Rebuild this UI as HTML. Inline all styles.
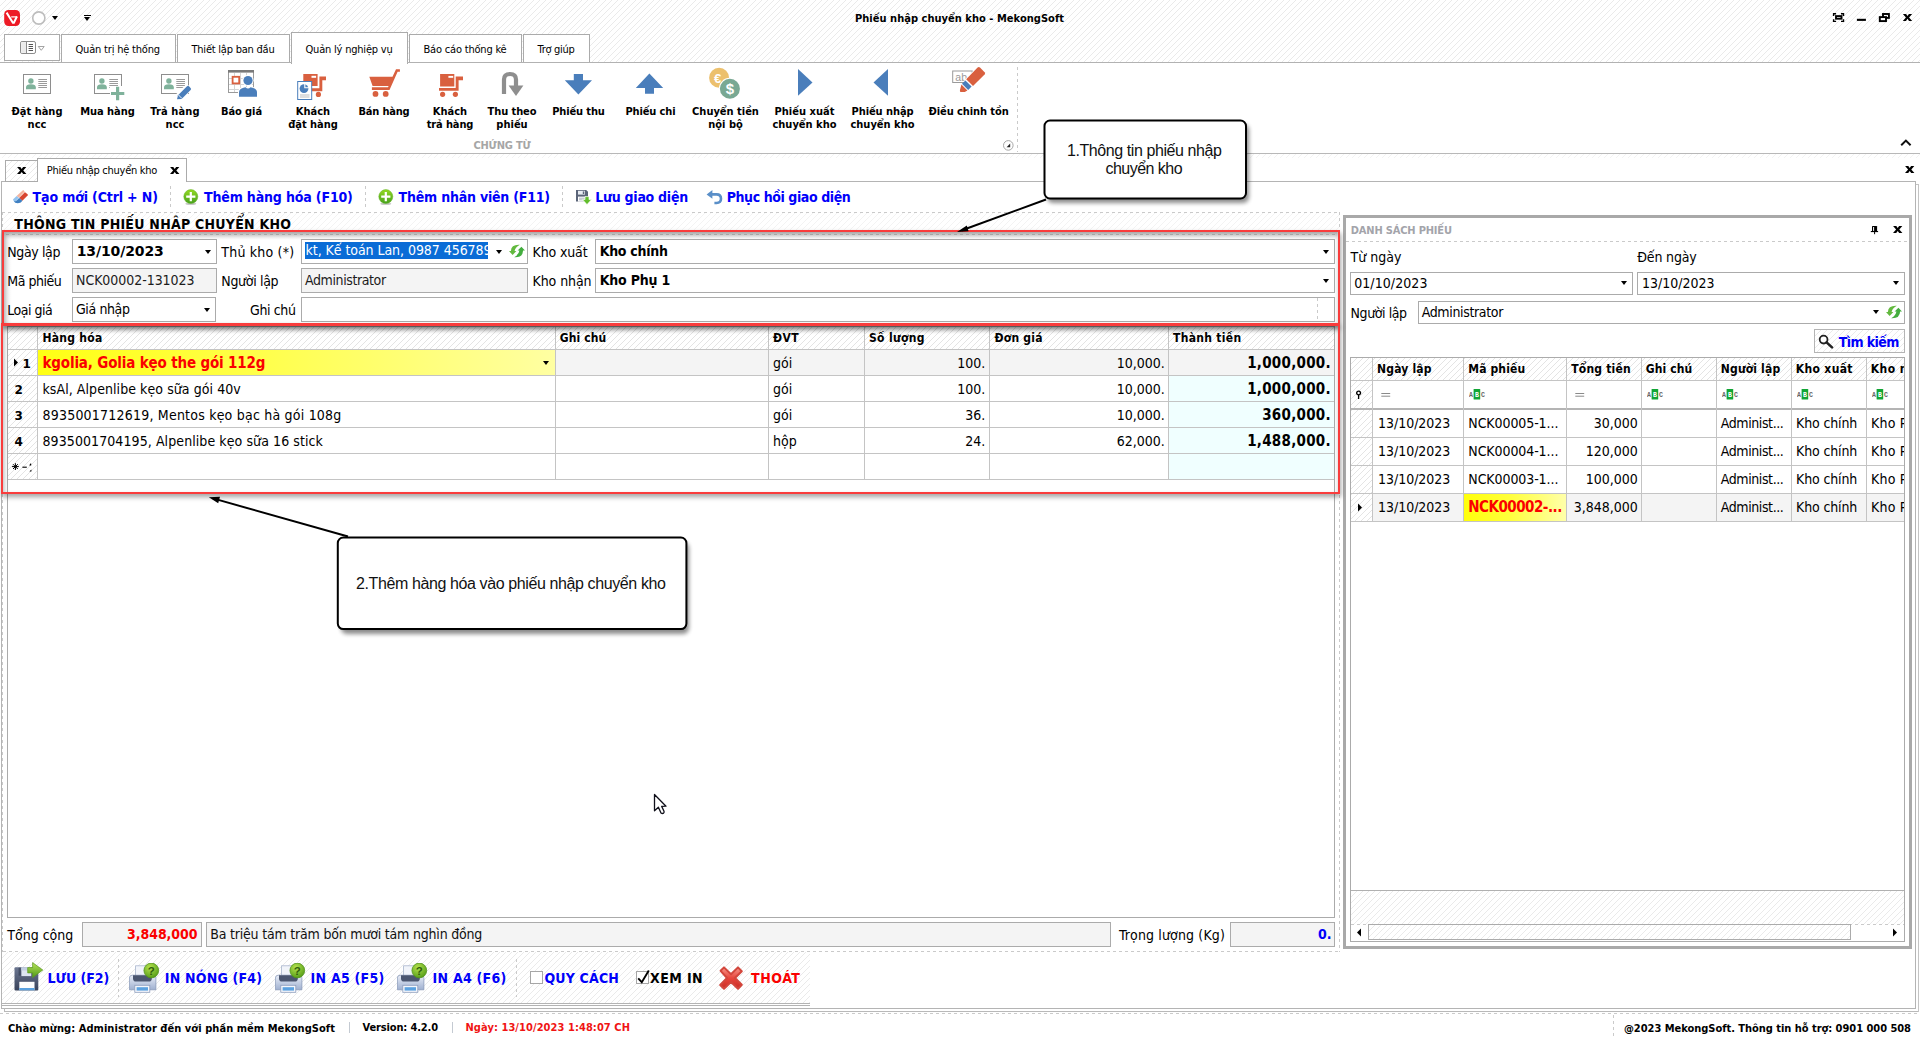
<!DOCTYPE html>
<html lang="vi">
<head>
<meta charset="utf-8">
<title>Phiếu nhập chuyển kho - MekongSoft</title>
<style>
*{box-sizing:border-box;margin:0;padding:0}
html,body{width:1920px;height:1039px;overflow:hidden;background:#fff}
body{position:relative;font-family:"DejaVu Sans Condensed","Liberation Sans",sans-serif;font-size:14px;color:#000;line-height:1}
.a{position:absolute}
.t{position:absolute;white-space:nowrap;line-height:16px;height:16px}
.b{font-weight:bold}
.s11{font-size:11px;line-height:13px;height:13px}
.h12{font-size:12px;line-height:15px;height:15px}
.hatch{background-color:#fff;background-image:repeating-linear-gradient(135deg,#eaeaea 0,#eaeaea 0.7px,rgba(255,255,255,0) 0.7px,rgba(255,255,255,0) 4.2426px)}
.hatch2{background-color:#fff;background-image:repeating-linear-gradient(135deg,#e4e4e4 0,#e4e4e4 0.7px,rgba(255,255,255,0) 0.7px,rgba(255,255,255,0) 4.2426px)}
.hatchL{background-color:#fff;background-image:repeating-linear-gradient(135deg,#f3f3f3 0,#f3f3f3 0.7px,rgba(255,255,255,0) 0.7px,rgba(255,255,255,0) 4.2426px)}
.box{position:absolute;border:1px solid #ababab;background-color:#fff}
.dis{background-color:#f4f4f4}
.blue{color:#0000fa}
.red{color:#fa0000}
.arr{position:absolute;width:0;height:0;border-left:3.5px solid transparent;border-right:3.5px solid transparent;border-top:4px solid #000}
.vdash{position:absolute;width:1px;background:repeating-linear-gradient(180deg,#cacaca 0,#cacaca 3px,rgba(255,255,255,0) 3px,rgba(255,255,255,0) 6px)}
.hdash{position:absolute;height:1px;background:repeating-linear-gradient(90deg,#cacaca 0,#cacaca 3px,rgba(255,255,255,0) 3px,rgba(255,255,255,0) 6px)}
.rl{position:absolute;text-align:center;font-weight:bold;font-size:11px;line-height:13px;white-space:nowrap}
.gl{position:absolute;background:#c4c4c4}
</style>
</head>
<body>
<div class="a hatch" style="left:0;top:0;width:1920px;height:63px"></div>
<div class="a hatchL" style="left:0;top:154px;width:1920px;height:4px"></div>
<!-- app logo -->
<svg class="a" style="left:4px;top:10px" width="16" height="16" viewBox="0 0 16 16"><rect x="0.2" y="0" width="15.8" height="15.9" rx="4.2" fill="#ed1b26"/><path d="M2.6 2.6L8.9 12.7H9.9L12.9 6.5" fill="none" stroke="#fff" stroke-width="2" stroke-linejoin="miter"/><path d="M7.2 6.9H13.2" stroke="#fff" stroke-width="1.2"/></svg>
<svg class="a" style="left:30px;top:9px" width="18" height="18" viewBox="0 0 18 18"><circle cx="8.8" cy="9" r="6.1" fill="#fff" stroke="#bdbdbd" stroke-width="1.6"/></svg>
<div class="arr" style="left:52px;top:16px"></div>
<div class="a" style="left:84px;top:15px;width:7px;height:1px;background:#000"></div>
<div class="arr" style="left:84px;top:17px"></div>
<div class="t b s11" style="letter-spacing:0.030px;left:855px;top:12px">Phiếu nhập chuyển kho - MekongSoft</div>
<!-- window buttons -->
<svg class="a" style="left:1832px;top:11px" width="84" height="13" viewBox="0 0 84 13" fill="none" stroke="#000">
<path d="M1.6 5V2.7H4.1 M9 2.7H11.5V5 M11.5 8.2V10.4H9 M4.1 10.4H1.6V8.2" stroke-width="1.4"/><rect x="4" y="5.1" width="5.5" height="2.6" stroke-width="1.9"/>
<rect x="24.9" y="7.8" width="9" height="2.1" fill="#000" stroke="none"/>
<rect x="51" y="3" width="5.9" height="3.9" stroke-width="1.9"/><rect x="47.8" y="6.1" width="6.2" height="4" stroke-width="1.9" fill="#fff"/>
<path transform="translate(70.8 2.9)" d="M0.1 0H3.3L4.7 2.1L6.1 0H9.3L6.3 3.5L9.4 7H6.2L4.7 4.9L3.2 7H0L3.1 3.5Z" fill="#000" stroke="none"/>
</svg>

<!-- ribbon tabs -->
<div class="a" style="left:0;top:63px;width:1920px;height:90px;background:#fff"></div>
<div class="a" style="left:0;top:153px;width:1920px;height:1px;background:#b8b8b8"></div>
<div class="box" style="left:4px;top:34px;width:56px;height:27px"></div>
<svg class="a" style="left:19px;top:40px" width="28" height="15" viewBox="0 0 28 15"><rect x="1.5" y="1.5" width="15" height="12" rx="1.6" fill="#fff" stroke="#8a8a8a" stroke-width="1"/><rect x="2.2" y="2.2" width="4.8" height="10.6" fill="#ebebeb"/><path d="M7.5 1.5V13.5" stroke="#8a8a8a"/><path d="M9.6 4.5H14M9.6 6.5H14M9.6 8.5H14M9.6 10.5H14" stroke="#555" stroke-width="1"/><path d="M19.3 6.5H25.2L22.25 10.3Z" fill="#fff" stroke="#9a9a9a" stroke-width="0.9"/></svg>
<div class="box" style="left:61px;top:34px;width:115px;height:28px;border-bottom:none"></div>
<div class="t s11" style="letter-spacing:-0.192px;left:75.5px;top:43px">Quản trị hệ thống</div>
<div class="box" style="left:177px;top:34px;width:113px;height:28px;border-bottom:none"></div>
<div class="t s11" style="letter-spacing:-0.224px;left:191.5px;top:43px">Thiết lập ban đầu</div>
<div class="box" style="left:291px;top:32px;width:117px;height:32px;border-bottom:none"></div>
<div class="t s11" style="letter-spacing:-0.207px;left:305.5px;top:43px">Quản lý nghiệp vụ</div>
<div class="box" style="left:409px;top:34px;width:113px;height:28px;border-bottom:none"></div>
<div class="t s11" style="letter-spacing:-0.193px;left:423.5px;top:43px">Báo cáo thống kê</div>
<div class="box" style="left:523px;top:34px;width:67px;height:28px;border-bottom:none"></div>
<div class="t s11" style="letter-spacing:-0.285px;left:537.5px;top:43px">Trợ giúp</div>
<div class="a" style="left:0;top:62px;width:292px;height:1px;background:#b2b2b2"></div><div class="a" style="left:407px;top:62px;width:1513px;height:1px;background:#b2b2b2"></div>
<!-- ribbon icons -->
<svg class="a" style="left:0;top:63px" width="1030" height="40" viewBox="0 63 1030 40">
<!-- 1 card -->
<g id="card"><rect x="23.5" y="74.5" width="27" height="19" fill="#fff" stroke="#8e8e8e"/><circle cx="30.9" cy="81" r="2.7" fill="#7fb29b"/><path d="M26 89.2V87.2Q26 84.2 30.9 84.2Q35.8 84.2 35.8 87.2V89.2Z" fill="#7fb29b"/><path d="M38.3 79.5H47M38.3 81.5H47M38.3 83.5H47M38.3 85.5H47M38.3 87.5H47" stroke="#9a9a9a" stroke-width="1"/></g>
<!-- 2 card plus -->
<use href="#card" x="71"/><rect x="110" y="86" width="15" height="15" fill="#fff"/><path d="M111 93.5H124.3M117.6 86.8V100.2" stroke="#7fb29b" stroke-width="3.2"/>
<!-- 3 card pencil -->
<use href="#card" x="138"/><path d="M176 100 L174.8 95.6 L185.4 85 L187.6 84.4 L191.6 88.4 L191 90.6 L180.4 101.2Z" fill="#fff"/><path d="M177 99.3 L178 95.3 L187 86.3 Q188 85.4 189 86.3 L190.6 87.9 Q191.5 88.9 190.6 89.9 L181.6 98.9 Z" fill="#4a7ebb"/><path d="M178.4 94.9L182 98.5" stroke="#fff" stroke-width="0.9"/>
<!-- 4 calendar person -->
<rect x="228.5" y="70.5" width="25" height="22" fill="#fff" stroke="#9a9a9a"/><rect x="228" y="70" width="26" height="2.6" fill="#7a7a7a"/><path d="M234.5 73V92M240.5 73V92M246.5 73V92M229 78.5H253M229 84.5H253M229 89.5H253" stroke="#d4d4d4" stroke-width="1"/><rect x="232.6" y="76.8" width="6.6" height="6.6" fill="#fff" stroke="#d9603f" stroke-width="1.8"/>
<path d="M238 97.5V92Q238 88 243 87L253 87Q258 88 258 92V97.5Z" fill="#fff"/><circle cx="248" cy="80.3" r="5.6" fill="#fff"/><circle cx="248" cy="80.5" r="4.6" fill="#4a7ebb"/><path d="M239 96.7V92.5Q239 88.8 243.5 87.8L245.5 87.2Q248 89.6 250.5 87.2L252.5 87.8Q257 88.8 257 92.5V96.7Z" fill="#4a7ebb"/>
<!-- 5 cart + doc -->
<g fill="#d9603f"><rect x="303.3" y="74" width="14.3" height="12"/><path d="M319.4 76.6H326V80.2H322.3V91.2H311V88.3H319.4Z"/><circle cx="318.4" cy="94.4" r="2.6"/></g><rect x="311.5" y="75.8" width="4.6" height="2" fill="#fff"/>
<rect x="297.7" y="81.5" width="14" height="18" fill="#fff" stroke="#4a7ebb" stroke-width="1"/><circle cx="304" cy="88.6" r="4.4" fill="#4a7ebb"/><path d="M304.8 83.4V87.8H309.2" stroke="#fff" stroke-width="1.1" fill="none"/><path d="M300 95H309.5M300 97H309.5" stroke="#b5b5b5" stroke-width="0.9"/>
<!-- 6 cart -->
<g fill="#d9603f"><path d="M369.3 76.8H392.5L396 69.3H399.9V71.8H397.6L389.5 90H371.9V87.3H388L388.6 86H372.6Z"/><circle cx="375.5" cy="93.9" r="2.9"/><circle cx="385.7" cy="93.9" r="2.9"/></g>
<!-- 7 trolley -->
<g fill="#d9603f"><rect x="440.1" y="74" width="14.2" height="12.5"/><path d="M455.7 76.6H463V80.2H458.6V90.7H439V88H455.7Z"/><circle cx="442.6" cy="94.3" r="2.6"/><circle cx="455.4" cy="94.3" r="2.6"/></g><rect x="448.4" y="75.9" width="4.8" height="1.9" fill="#fff"/>
<!-- 8 u-turn -->
<path d="M504 94V79.5Q504 74 510 74Q516 74 516 79.5V90" fill="none" stroke="#8e8e8e" stroke-width="4.2"/><path d="M508.6 85.5H523.4L516 96Z" fill="#8e8e8e"/>
<!-- 9 down -->
<path d="M573.8 74.1H583V80.2H592L578.4 94.4L564.8 80.2H573.8Z" fill="#4a7ebb"/>
<!-- 10 up -->
<path d="M649.4 73.4L663.2 88H654V93.8H645V88H635.8Z" fill="#4a7ebb"/>
<!-- 11 coins -->
<circle cx="719.1" cy="77.8" r="10" fill="#ecc06d"/><circle cx="729.9" cy="88.7" r="11" fill="#fff"/><circle cx="729.9" cy="88.7" r="10" fill="#79a893"/>
<text x="717.5" y="82.6" font-family="'Liberation Sans',sans-serif" font-weight="bold" font-size="13" fill="#fff" text-anchor="middle">€</text>
<text x="730" y="94.2" font-family="'Liberation Sans',sans-serif" font-weight="bold" font-size="15" fill="#fff" text-anchor="middle">$</text>
<!-- 12,13 triangles -->
<path d="M798 69V95.8L812.5 82.4Z" fill="#4a7ebb"/><path d="M888 69V95.8L873.5 82.4Z" fill="#4a7ebb"/>
<!-- 14 marker -->
<rect x="952.7" y="71" width="19.5" height="11.5" fill="#fff" stroke="#9a9a9a"/><text x="955.3" y="80.5" font-family="'Liberation Sans',sans-serif" font-size="10.5" fill="#9a9a9a">ab</text>
<path d="M977.6 67.6 Q978.8 66.6 980 67.6 L984.6 72.2 Q985.6 73.4 984.6 74.6 L972 87 L965.2 80.2Z" fill="#fff" stroke="#fff" stroke-width="1.6"/>
<path d="M977.6 67.6 Q978.8 66.6 980 67.6 L984.6 72.2 Q985.6 73.4 984.6 74.6 L973 86 L966.2 79.2Z" fill="#d9603f"/><path d="M965.4 80.4L971.6 86.6L968.2 90L962 83.8Z" fill="#4a7ebb"/><path d="M961.4 84.6L967.4 90.6L964.8 92H960.4Q959.6 91.2 960 90Z" fill="#d9603f"/>
</svg>
<!-- ribbon labels -->
<div class="rl" style="left:-3px;top:105px;width:80px"><span style="letter-spacing:0.000px;">Đặt hàng</span><br>ncc</div>
<div class="rl" style="left:67.5px;top:105px;width:80px"><span style="letter-spacing:-0.022px;">Mua hàng</span></div>
<div class="rl" style="left:135px;top:105px;width:80px"><span style="letter-spacing:0.149px;">Trả hàng</span><br>ncc</div>
<div class="rl" style="left:201.5px;top:105px;width:80px"><span style="letter-spacing:-0.089px;">Báo giá</span></div>
<div class="rl" style="left:273px;top:105px;width:80px">Khách<br><span style="letter-spacing:-0.025px;">đặt hàng</span></div>
<div class="rl" style="left:344px;top:105px;width:80px"><span style="letter-spacing:-0.195px;">Bán hàng</span></div>
<div class="rl" style="left:410px;top:105px;width:80px">Khách<br><span style="letter-spacing:-0.112px;">trả hàng</span></div>
<div class="rl" style="left:472px;top:105px;width:80px"><span style="letter-spacing:-0.087px;">Thu theo</span><br>phiếu</div>
<div class="rl" style="left:538.5px;top:105px;width:80px"><span style="letter-spacing:-0.135px;">Phiếu thu</span></div>
<div class="rl" style="left:610.5px;top:105px;width:80px"><span style="letter-spacing:-0.134px;">Phiếu chi</span></div>
<div class="rl" style="left:685.5px;top:105px;width:80px"><span style="letter-spacing:-0.010px;">Chuyển tiền</span><br>nội bộ</div>
<div class="rl" style="left:764.5px;top:105px;width:80px"><span style="letter-spacing:0.027px;">Phiếu xuất</span><br><span style="letter-spacing:0.015px;">chuyển kho</span></div>
<div class="rl" style="left:842.5px;top:105px;width:80px"><span style="letter-spacing:-0.075px;">Phiếu nhập</span><br><span style="letter-spacing:0.015px;">chuyển kho</span></div>
<div class="rl" style="left:928.5px;top:105px;width:80px"><span style="letter-spacing:-0.079px;">Điều chinh tồn</span></div>
<div class="t b s11" style="letter-spacing:-0.211px;left:473.5px;top:139px;color:#a6a6a6">CHỨNG TỪ</div>
<div class="vdash" style="left:1017px;top:67px;height:85px"></div>
<svg class="a" style="left:1002px;top:139px" width="13" height="13" viewBox="0 0 13 13"><circle cx="6.3" cy="6.4" r="4.8" fill="#fff" stroke="#9c9c9c" stroke-width="0.9"/><path d="M8.2 4.6V8.2H4.6Z" fill="#222"/></svg>
<svg class="a" style="left:1899px;top:138px" width="14" height="9" viewBox="0 0 14 9"><path d="M2.2 7.2L6.9 2.6L11.6 7.2" fill="none" stroke="#111" stroke-width="2"/></svg>

<!-- doc tabs -->
<div class="a" style="left:1px;top:181px;width:1px;height:828px;background:#b4b4b4"></div>
<div class="a" style="left:1px;top:181px;width:1915px;height:1px;background:#b4b4b4"></div>
<div class="box hatch" style="left:5px;top:160px;width:33px;height:22px"></div>
<div class="box" style="left:37px;top:158px;width:150px;height:24px;border-bottom:none"></div>
<div class="t s11" style="letter-spacing:-0.269px;left:46.8px;top:164px">Phiếu nhập chuyển kho</div>
<svg class="a" style="left:17px;top:166.9px" width="10" height="8" viewBox="0 0 10 8"><path d="M0.1 0H3.3L4.7 2.1L6.1 0H9.3L6.3 3.5L9.4 7H6.2L4.7 4.9L3.2 7H0L3.1 3.5Z" fill="#000"/></svg>
<svg class="a" style="left:170px;top:166.9px" width="10" height="8" viewBox="0 0 10 8"><path d="M0.1 0H3.3L4.7 2.1L6.1 0H9.3L6.3 3.5L9.4 7H6.2L4.7 4.9L3.2 7H0L3.1 3.5Z" fill="#000"/></svg>
<svg class="a" style="left:1904.9px;top:165.9px" width="10" height="8" viewBox="0 0 10 8"><path d="M0.1 0H3.3L4.7 2.1L6.1 0H9.3L6.3 3.5L9.4 7H6.2L4.7 4.9L3.2 7H0L3.1 3.5Z" fill="#000"/></svg>

<!-- toolbar -->
<div class="hdash" style="left:2px;top:212px;width:1337px"></div>
<svg class="a" style="left:12px;top:189px" width="17" height="16" viewBox="0 0 17 16"><path d="M10.6 1.4Q11.2 0.8 11.8 1.4L13 3.2L7.2 9L4.6 6.9Z" fill="#f4b49e"/><path d="M13 3.2L15.6 5.2Q16.1 5.9 15.6 6.5L10.4 11.8L7.2 9Z" fill="#d8452f"/><path d="M4.6 6.9L7.2 9L4.6 11.8Q3 12.6 1.6 11.6Q0.6 10.8 1.2 10.2Z" fill="#93c3ef"/><path d="M7.2 9L10.4 11.8L8.8 13.4Q6 14.8 3.2 13.8L1.4 11.4Q3 12.7 4.6 11.8Z" fill="#3f80c2"/><path d="M12.4 2.9L5.2 10.4" stroke="#fff" stroke-width="0.7" stroke-dasharray="1 0.6" opacity="0.8"/></svg>
<div class="t b blue" style="letter-spacing:-0.143px;left:32.6px;top:189px">Tạo mới (Ctrl + N)</div>
<div class="vdash" style="left:170px;top:186px;height:22px"></div>
<svg class="a" style="left:182px;top:188px" width="18" height="18" viewBox="0 0 18 18"><defs><linearGradient id="gp" x1="0" y1="0" x2="0" y2="1"><stop offset="0" stop-color="#95da22"/><stop offset="1" stop-color="#46a01c"/></linearGradient></defs><ellipse cx="8.8" cy="15.8" rx="5.5" ry="1.2" fill="#c9c9c9"/><circle cx="8.8" cy="8.6" r="7" fill="url(#gp)" stroke="#5aad1e" stroke-width="0.5"/><path d="M8.8 4V13.2M4.2 8.6H13.4" stroke="#fff" stroke-width="2.2"/></svg>
<div class="t b blue" style="letter-spacing:-0.152px;left:204px;top:189px">Thêm hàng hóa (F10)</div>
<div class="vdash" style="left:365px;top:186px;height:22px"></div>
<svg class="a" style="left:376.8px;top:188px" width="18" height="18" viewBox="0 0 18 18"><ellipse cx="8.8" cy="15.8" rx="5.5" ry="1.2" fill="#c9c9c9"/><circle cx="8.8" cy="8.6" r="7" fill="url(#gp)" stroke="#5aad1e" stroke-width="0.5"/><path d="M8.8 4V13.2M4.2 8.6H13.4" stroke="#fff" stroke-width="2.2"/></svg>
<div class="t b blue" style="letter-spacing:-0.208px;left:398.6px;top:189px">Thêm nhân viên (F11)</div>
<div class="vdash" style="left:562px;top:186px;height:22px"></div>
<svg class="a" style="left:575px;top:189px" width="17" height="16" viewBox="0 0 17 16"><path d="M1 1H11.2L13 2.8V12.6H1Z" fill="#5a6478"/><rect x="3" y="1.8" width="7" height="3.8" fill="#e8ecf2"/><rect x="7.8" y="2.4" width="1.5" height="2.6" fill="#5a6478"/><rect x="3" y="7.6" width="8" height="5" fill="#fff"/><path d="M4 9.2H10M4 10.8H10" stroke="#9aa2b2" stroke-width="0.8"/><path d="M10 7.6H14V10.6H16.6L12 15.6L7.4 10.6H10Z" fill="#62bd2c" stroke="#fff" stroke-width="0.7"/></svg>
<div class="t b blue" style="letter-spacing:-0.266px;left:595.3px;top:189px">Lưu giao diện</div>
<svg class="a" style="left:706px;top:189px" width="17" height="16" viewBox="0 0 17 16"><path d="M0.6 5.4L6.4 1V9.8Z" fill="#5a8fc8"/><path d="M5.8 5.4H10.6Q15 5.4 15 9.7Q15 14 10.6 14H8.4" fill="none" stroke="#5a8fc8" stroke-width="2.6"/></svg>
<div class="t b blue" style="letter-spacing:-0.408px;left:726.7px;top:189px">Phục hồi giao diện</div>

<!-- left panel header -->
<div class="a hatchL" style="left:3px;top:213px;width:1336px;height:17px"></div>
<div class="vdash" style="left:1339px;top:212px;height:17px"></div>
<div class="t b" style="letter-spacing:0.256px;left:14.3px;top:216px;font-size:14px">THÔNG TIN PHIẾU NHẬP CHUYỂN KHO</div>
<!-- form area -->
<div class="a" style="left:4px;top:232px;width:1333px;height:8px;background:linear-gradient(#e9e9e9,#fff)"></div>
<div class="a" style="left:4px;top:232px;width:8px;height:92px;background:linear-gradient(90deg,#ececec,rgba(255,255,255,0))"></div>
<div class="hdash" style="left:6px;top:234px;width:1329px;border-color:#c4c4c4"></div>
<div class="t" style="letter-spacing:-0.389px;left:7.3px;top:244px">Ngày lập</div>
<div class="t" style="letter-spacing:-0.477px;left:7.3px;top:273px">Mã phiếu</div>
<div class="t" style="letter-spacing:-0.488px;left:7.3px;top:302px">Loại giá</div>
<div class="box" style="left:72px;top:239px;width:145px;height:25px"></div>
<div class="t b" style="letter-spacing:-0.116px;left:76.7px;top:243px;font-family:'DejaVu Sans',sans-serif">13/10/2023</div>
<div class="arr" style="left:205px;top:250px"></div>
<div class="box dis" style="left:72px;top:268px;width:145px;height:25px"></div>
<div class="t" style="letter-spacing:-0.044px;left:76px;top:272px;color:#1c1c1c">NCK00002-131023</div>
<div class="box" style="left:72px;top:297px;width:144px;height:25px"></div>
<div class="t" style="letter-spacing:-0.396px;left:76px;top:301px">Giá nhập</div>
<div class="arr" style="left:204px;top:308px"></div>
<div class="t" style="letter-spacing:0.203px;left:221.3px;top:244px">Thủ kho (*)</div>
<div class="t" style="letter-spacing:-0.314px;left:221.3px;top:273px">Người lập</div>
<div class="t" style="letter-spacing:-0.377px;left:250px;top:302px">Ghi chú</div>
<div class="box" style="left:301px;top:239px;width:227px;height:25px"></div>
<div class="a" style="left:305px;top:242px;width:183px;height:17px;background:#0a6cd6;overflow:hidden"><div class="t" style="letter-spacing:-0.051px;left:0.5px;top:0px;color:#fff">kt, Kế toán Lan, 0987 456789</div></div>
<div class="arr" style="left:496px;top:250px"></div>
<svg class="a" style="left:509px;top:244px" width="16" height="14" viewBox="0 0 16 14"><path d="M10.8 0.7Q2.1 0.2 1.9 7H0L3.6 10.9L7.4 7H5.6Q5.9 3.6 10.8 0.7Z" fill="#62b93e"/><path d="M5.2 13.3Q13.9 13.8 14.1 6.6H16L12.4 2.7L8.6 6.6H10.4Q10.1 10.4 5.2 13.3Z" fill="#43ad3e"/></svg>
<div class="box dis" style="left:301px;top:268px;width:227px;height:25px"></div>
<div class="t" style="letter-spacing:-0.394px;left:305px;top:272px;color:#1c1c1c">Administrator</div>
<div class="box" style="left:301px;top:297px;width:1034px;height:25px"></div>
<div class="vdash" style="left:1317px;top:298px;height:23px"></div>
<div class="t" style="letter-spacing:-0.131px;left:532.5px;top:244px">Kho xuất</div>
<div class="t" style="letter-spacing:-0.078px;left:532.5px;top:273px">Kho nhận</div>
<div class="box" style="left:595px;top:239px;width:740px;height:25px"></div>
<div class="t b" style="letter-spacing:-0.273px;left:599.7px;top:243px;font-size:14px">Kho chính</div>
<div class="arr" style="left:1323px;top:250px"></div>
<div class="box" style="left:595px;top:268px;width:740px;height:25px"></div>
<div class="t b" style="letter-spacing:-0.175px;left:599.7px;top:272px;font-size:14px">Kho Phụ 1</div>
<div class="arr" style="left:1323px;top:279px"></div>

<!-- main grid -->
<div class="a" style="left:7px;top:326px;width:1328px;height:592px;border:1px solid #ababab;background:#fff"></div>
<div class="a hatch2" style="left:8px;top:327px;width:1326px;height:22px"></div>
<div class="a hatch2" style="left:8px;top:350px;width:29px;height:129px"></div>
<div class="a" style="left:38px;top:350px;width:517px;height:25px;background:linear-gradient(90deg,#ffff14,#ffff46 40%,#ffffa2)"></div>
<div class="a" style="left:556px;top:350px;width:778px;height:25px;background:#f4f4f4"></div>
<div class="a" style="left:1169px;top:376px;width:165px;height:103px;background:#f0ffff"></div>
<div class="gl" style="left:8px;top:349px;width:1326px;height:1px"></div>
<div class="gl" style="left:8px;top:375px;width:1326px;height:1px"></div>
<div class="gl" style="left:8px;top:401px;width:1326px;height:1px"></div>
<div class="gl" style="left:8px;top:427px;width:1326px;height:1px"></div>
<div class="gl" style="left:8px;top:453px;width:1326px;height:1px"></div>
<div class="gl" style="left:8px;top:479px;width:1326px;height:1px"></div>
<div class="gl" style="left:37px;top:327px;width:1px;height:153px"></div>
<div class="gl" style="left:555px;top:327px;width:1px;height:153px"></div>
<div class="gl" style="left:768px;top:327px;width:1px;height:153px"></div>
<div class="gl" style="left:864px;top:327px;width:1px;height:153px"></div>
<div class="gl" style="left:989px;top:327px;width:1px;height:153px"></div>
<div class="gl" style="left:1168px;top:327px;width:1px;height:153px"></div>
<div class="t b h12" style="letter-spacing:0.264px;left:42.5px;top:331px">Hàng hóa</div>
<div class="t b h12" style="letter-spacing:0.088px;left:559.8px;top:331px">Ghi chú</div>
<div class="t b h12" style="letter-spacing:0.406px;left:773px;top:331px">ĐVT</div>
<div class="t b h12" style="letter-spacing:0.316px;left:869px;top:331px">Số lượng</div>
<div class="t b h12" style="letter-spacing:0.268px;left:994.4px;top:331px">Đơn giá</div>
<div class="t b h12" style="letter-spacing:0.306px;left:1173px;top:331px">Thành tiền</div>
<svg class="a" style="left:13px;top:358px" width="6" height="9" viewBox="0 0 6 9"><path d="M1 0.6L5 4.5L1 8.4Z" fill="#000"/></svg>
<div class="t b h12" style="left:22.5px;top:356.5px;font-family:'DejaVu Sans',sans-serif;">1</div>
<div class="t b red" style="letter-spacing:-0.162px;left:42.5px;top:355px;font-size:15px">kgolia, Golia kẹo the gói 112g</div>
<div class="arr" style="left:543px;top:361px"></div>
<div class="t" style="left:773px;top:355px">gói</div>
<div class="t" style="right:934.7px;top:355px">100.</div>
<div class="t" style="right:755.2px;top:355px">10,000.</div>
<div class="t b" style="right:589.2px;top:355px;font-size:15px;letter-spacing:0.25px">1,000,000.</div>
<div class="t b h12" style="left:14.5px;top:382.5px;font-family:'DejaVu Sans',sans-serif;">2</div>
<div class="t" style="letter-spacing:0.066px;left:42.5px;top:381px">ksAl, Alpenlibe kẹo sữa gói 40v</div>
<div class="t" style="left:773px;top:381px">gói</div>
<div class="t" style="right:934.7px;top:381px">100.</div>
<div class="t" style="right:755.2px;top:381px">10,000.</div>
<div class="t b" style="right:589.2px;top:381px;font-size:15px;letter-spacing:0.25px">1,000,000.</div>
<div class="t b h12" style="left:14.5px;top:408.5px;font-family:'DejaVu Sans',sans-serif;">3</div>
<div class="t" style="letter-spacing:0.213px;left:42.5px;top:407px">8935001712619, Mentos kẹo bạc hà gói 108g</div>
<div class="t" style="left:773px;top:407px">gói</div>
<div class="t" style="right:934.7px;top:407px">36.</div>
<div class="t" style="right:755.2px;top:407px">10,000.</div>
<div class="t b" style="right:589.2px;top:407px;font-size:15px;letter-spacing:0.25px">360,000.</div>
<div class="t b h12" style="left:14.5px;top:434.5px;font-family:'DejaVu Sans',sans-serif;">4</div>
<div class="t" style="letter-spacing:0.085px;left:42.5px;top:433px">8935001704195, Alpenlibe kẹo sữa 16 stick</div>
<div class="t" style="left:773px;top:433px">hộp</div>
<div class="t" style="right:934.7px;top:433px">24.</div>
<div class="t" style="right:755.2px;top:433px">62,000.</div>
<div class="t b" style="right:589.2px;top:433px;font-size:15px;letter-spacing:0.25px">1,488,000.</div>
<svg class="a" style="left:11px;top:462px" width="22" height="11" viewBox="0 0 22 11"><path d="M4.4 1.2V8M1 4.6H7.8M2 2.2L6.8 7M6.8 2.2L2 7" stroke="#000" stroke-width="1"/><path d="M11.4 5.2H15.8" stroke="#000" stroke-width="1.1"/><path d="M18.2 3.6L19.4 1.4H20.2V3.6Z M18.4 9.4H20.4V7.6Z" fill="#000"/></svg>

<!-- footer -->
<div class="vdash" style="left:2px;top:212px;height:740px"></div>
<div class="t" style="letter-spacing:0.000px;left:7.3px;top:927px">Tổng cộng</div>
<div class="box dis" style="left:82px;top:922px;width:120px;height:25px"></div>
<div class="t b red" style="letter-spacing:-0.047px;left:127px;top:926px">3,848,000</div>
<div class="box dis" style="left:206px;top:922px;width:905px;height:25px"></div>
<div class="t" style="letter-spacing:-0.194px;left:210.2px;top:926px;color:#111">Ba triệu tám trăm bốn mươi tám nghìn đồng</div>
<div class="t" style="letter-spacing:0.141px;left:1119px;top:927px">Trọng lượng (Kg)</div>
<div class="box dis" style="left:1230px;top:922px;width:105px;height:25px"></div>
<div class="t b blue" style="left:1318px;top:926px">0.</div>
<div class="hdash" style="left:3px;top:951px;width:1336px"></div>
<div class="vdash" style="left:1339px;top:231px;height:721px"></div>

<!-- bottom buttons -->
<div class="a hatch" style="left:2px;top:952px;width:808px;height:51px"></div>
<div class="a" style="left:2px;top:1003px;width:808px;height:1px;background:#b4b4b4"></div>
<div class="a" style="left:2px;top:1005px;width:808px;height:1px;background:#b4b4b4"></div>
<div class="a" style="left:1px;top:1008px;width:1915px;height:1px;background:#b4b4b4"></div>
<div class="a" style="left:4px;top:1008px;width:1px;height:3px;background:#b9b9b9"></div>
<div class="a" style="left:4px;top:1011px;width:1915px;height:1px;background:#b9b9b9"></div>
<div class="hdash" style="left:0;top:1013px;width:1920px"></div>
<div class="vdash" style="left:118px;top:959px;height:38px"></div>
<div class="vdash" style="left:516px;top:959px;height:38px"></div>
<svg width="0" height="0" style="position:absolute"><defs>
<linearGradient id="fl1" x1="0" y1="0" x2="0" y2="1"><stop offset="0" stop-color="#6b7690"/><stop offset="1" stop-color="#39425a"/></linearGradient>
<linearGradient id="gr1" x1="0" y1="0" x2="0" y2="1"><stop offset="0" stop-color="#b7e35a"/><stop offset="1" stop-color="#4f9a16"/></linearGradient>
<linearGradient id="pr1" x1="0" y1="0" x2="0" y2="1"><stop offset="0" stop-color="#e9eef8"/><stop offset="1" stop-color="#9fb0d0"/></linearGradient>
<radialGradient id="qg" cx="0.4" cy="0.3" r="0.8"><stop offset="0" stop-color="#b4e24e"/><stop offset="1" stop-color="#4c9612"/></radialGradient>
<g id="floppy"><path d="M1.5 5.3H23.3Q24.3 5.3 24.3 6.3V27.6Q24.3 28.6 23.3 28.6H1.5Q0.5 28.6 0.5 27.6V6.3Q0.5 5.3 1.5 5.3Z" fill="url(#fl1)"/><rect x="4.6" y="5.6" width="2.2" height="8" fill="#2a3348" opacity="0.55"/><rect x="7.4" y="5.5" width="9.8" height="8.6" fill="#dde5f1"/><rect x="7.4" y="5.5" width="9.8" height="3" fill="#c3cfe2"/><rect x="5.3" y="19.8" width="15.2" height="8.4" fill="#fdfdfd"/><rect x="5.3" y="26" width="15.2" height="2.3" fill="#5aa0de"/>
<path d="M13.7 5.6H18.6V0.6L28.8 8L18.6 15.6V10.9H13.7Z" fill="url(#gr1)" stroke="#5d9a1e" stroke-width="0.7"/></g>
<g id="printer"><rect x="6.6" y="2.8" width="14" height="11" fill="#f1f4fa" stroke="#a9b5cd" stroke-width="0.8"/><path d="M3.2 12.2H24.2Q26.9 12.2 26.9 14.9V26.8H0.4V14.9Q0.4 12.2 3.2 12.2Z" fill="url(#pr1)" stroke="#8393b5" stroke-width="0.7"/><path d="M4 12.3H22.8V15.4Q22.8 18.5 19.8 18.5H7Q4 18.5 4 15.4Z" fill="#4b5670"/><rect x="5.8" y="22.3" width="15" height="7" fill="#f4f7fc" stroke="#8e9dbd" stroke-width="0.8"/><rect x="7.6" y="24.2" width="11.4" height="3.4" fill="#5da2e0"/>
<circle cx="22.3" cy="7.5" r="7.4" fill="url(#qg)" stroke="#4d8f1a" stroke-width="0.7"/><text x="22.3" y="11.6" font-family="'Liberation Sans',sans-serif" font-weight="bold" font-size="11.5" text-anchor="middle" fill="#2f5d0c">?</text></g>
</defs></svg>
<svg class="a" style="left:13.5px;top:962px" width="31" height="30" viewBox="0 0 31 30"><use href="#floppy"/></svg>
<div class="t b blue" style="letter-spacing:-0.068px;left:47.6px;top:970.3px;font-size:14px">LƯU (F2)</div>
<svg class="a" style="left:129px;top:962.5px" width="31" height="30" viewBox="0 0 31 30"><use href="#printer"/></svg>
<div class="t b blue" style="letter-spacing:0.208px;left:164.8px;top:970.3px;font-size:14px">IN NÓNG (F4)</div>
<svg class="a" style="left:275px;top:962.5px" width="31" height="30" viewBox="0 0 31 30"><use href="#printer"/></svg>
<div class="t b blue" style="letter-spacing:0.261px;left:310.5px;top:970.3px;font-size:14px">IN A5 (F5)</div>
<svg class="a" style="left:397px;top:962.5px" width="31" height="30" viewBox="0 0 31 30"><use href="#printer"/></svg>
<div class="t b blue" style="letter-spacing:0.261px;left:432.5px;top:970.3px;font-size:14px">IN A4 (F6)</div>
<div class="a" style="left:530px;top:971px;width:13px;height:13px;border:1px solid #a6a6a6;background:#fff"></div>
<div class="t b blue" style="letter-spacing:0.160px;left:544.5px;top:970.3px;font-size:14px">QUY CÁCH</div>
<div class="a" style="left:636px;top:971px;width:13px;height:13px;border:1px solid #a6a6a6;background:#fff"></div>
<svg class="a" style="left:636px;top:969px" width="15" height="15" viewBox="0 0 15 15"><path d="M2.2 9.4L5.8 13.2L12.8 1.6" fill="none" stroke="#000" stroke-width="1.9"/></svg>
<div class="t b" style="letter-spacing:0.422px;left:650px;top:970.3px;font-size:14px">XEM IN</div>
<svg class="a" style="left:717px;top:964px" width="28" height="28" viewBox="0 0 28 28"><defs><linearGradient id="rx" x1="0" y1="0" x2="0" y2="1"><stop offset="0" stop-color="#f7968a"/><stop offset="0.5" stop-color="#e8463c"/><stop offset="1" stop-color="#c92a22"/></linearGradient></defs><path d="M3.6 6.8L7 3.4L14 10.2L21 3.4L24.8 7.2L18 14L24.8 20.8L21 24.8L14 18L7 24.8L3.2 21L10 14Z" fill="url(#rx)" stroke="#d3463c" stroke-width="2" stroke-linejoin="round"/></svg>
<div class="t b red" style="letter-spacing:0.556px;left:751px;top:970.3px;font-size:14px">THOÁT</div>

<!-- status bar -->
<div class="t b s11" style="letter-spacing:0.053px;left:8px;top:1022px">Chào mừng: Administrator đến với phần mềm MekongSoft</div>
<div class="a" style="left:349px;top:1022px;width:1px;height:11px;background:#c4cad2"></div>
<div class="t b s11" style="letter-spacing:-0.134px;left:362.5px;top:1021px">Version: 4.2.0</div>
<div class="a" style="left:452px;top:1022px;width:1px;height:11px;background:#c4cad2"></div>
<div class="t b s11 red" style="letter-spacing:0.068px;left:465.5px;top:1021px;color:#f01414">Ngày: 13/10/2023 1:48:07 CH</div>
<div class="vdash" style="left:1613px;top:1015px;height:24px;border-color:#b5b5b5"></div>
<div class="t b s11" style="letter-spacing:-0.031px;left:1624px;top:1022px">@2023 MekongSoft. Thông tin hỗ trợ: 0901 000 508</div>

<!-- right panel -->
<div class="a" style="left:1343px;top:215px;width:569px;height:734px;border:3px solid #a9a9a9;background:#fff"></div>
<div class="t b s11" style="letter-spacing:-0.178px;left:1350.8px;top:224px;color:#a3a4aa">DANH SÁCH PHIẾU</div>
<svg class="a" style="left:1870px;top:225px" width="9" height="10" viewBox="0 0 9 10"><path d="M2 1.6Q2 1 2.6 1H6.4Q7.1 1 7.1 1.6V6.2H2Z" fill="#000"/><rect x="3.1" y="2" width="1" height="3.9" fill="#fff"/><rect x="0.8" y="6" width="7.3" height="1.1" fill="#000"/><rect x="4.1" y="7" width="1" height="2.2" fill="#000"/></svg>
<svg class="a" style="left:1892.8px;top:225.8px" width="10" height="8" viewBox="0 0 10 8"><path d="M0.1 0H3.3L4.7 2.1L6.1 0H9.3L6.3 3.5L9.4 7H6.2L4.7 4.9L3.2 7H0L3.1 3.5Z" fill="#000"/></svg>
<div class="hdash" style="left:1346px;top:241px;width:561px"></div>
<div class="t" style="letter-spacing:0.025px;left:1350.6px;top:249px">Từ ngày</div>
<div class="t" style="letter-spacing:-0.157px;left:1637.2px;top:249px">Đến ngày</div>
<div class="box" style="left:1350px;top:272px;width:283px;height:23px"></div>
<div class="t" style="letter-spacing:0.071px;left:1354.2px;top:275px">01/10/2023</div>
<div class="arr" style="left:1621px;top:281px"></div>
<div class="box" style="left:1637px;top:272px;width:268px;height:23px"></div>
<div class="t" style="letter-spacing:0.011px;left:1641.9px;top:275px">13/10/2023</div>
<div class="arr" style="left:1893px;top:281px"></div>
<div class="t" style="letter-spacing:-0.425px;left:1350.6px;top:305px">Người lập</div>
<div class="box" style="left:1418px;top:301px;width:487px;height:23px"></div>
<div class="t" style="letter-spacing:-0.348px;left:1421.7px;top:304px">Administrator</div>
<div class="arr" style="left:1873px;top:310px"></div>
<svg class="a" style="left:1886px;top:305px" width="16" height="14" viewBox="0 0 16 14"><path d="M10.8 0.7Q2.1 0.2 1.9 7H0L3.6 10.9L7.4 7H5.6Q5.9 3.6 10.8 0.7Z" fill="#62b93e"/><path d="M5.2 13.3Q13.9 13.8 14.1 6.6H16L12.4 2.7L8.6 6.6H10.4Q10.1 10.4 5.2 13.3Z" fill="#43ad3e"/></svg>
<div class="box hatch" style="left:1814px;top:329px;width:91px;height:24px;border-color:#b4b4b4"></div>
<svg class="a" style="left:1818px;top:334px" width="16" height="15" viewBox="0 0 16 15"><circle cx="5.6" cy="5.6" r="3.9" fill="#fff" stroke="#222" stroke-width="1.8"/><path d="M8.6 8.4L14 13.4" stroke="#222" stroke-width="2.6" stroke-linecap="round"/></svg>
<div class="t b blue" style="letter-spacing:-0.573px;left:1838.7px;top:334px">Tìm kiếm</div>
<div class="a" style="left:1350px;top:357px;width:555px;height:585px;border:1px solid #ababab;background:#fff"></div>
<div class="a hatch2" style="left:1351px;top:358px;width:553px;height:22px"></div>
<div class="a hatch2" style="left:1351px;top:381px;width:21px;height:140px"></div>
<div class="a" style="left:1373px;top:494px;width:531px;height:27px;background:#f4f4f4"></div>
<div class="a" style="left:1464px;top:494px;width:102px;height:27px;background:linear-gradient(90deg,#ffff0a,#ffff3c 45%,#ffffaa)"></div>
<div class="gl" style="left:1351px;top:380px;width:553px;height:1px"></div>
<div class="gl" style="left:1351px;top:437px;width:553px;height:1px"></div>
<div class="gl" style="left:1351px;top:465px;width:553px;height:1px"></div>
<div class="gl" style="left:1351px;top:493px;width:553px;height:1px"></div>
<div class="gl" style="left:1351px;top:521px;width:553px;height:1px"></div>
<div class="a" style="left:1351px;top:408px;width:553px;height:2px;background:#b4b4b4"></div>
<div class="gl" style="left:1372px;top:358px;width:1px;height:164px"></div>
<div class="gl" style="left:1463px;top:358px;width:1px;height:164px"></div>
<div class="gl" style="left:1566px;top:358px;width:1px;height:164px"></div>
<div class="gl" style="left:1641px;top:358px;width:1px;height:164px"></div>
<div class="gl" style="left:1716px;top:358px;width:1px;height:164px"></div>
<div class="gl" style="left:1791px;top:358px;width:1px;height:164px"></div>
<div class="gl" style="left:1866px;top:358px;width:1px;height:164px"></div>
<div class="t b h12" style="letter-spacing:0.189px;left:1377px;top:362px">Ngày lập</div>
<div class="t b h12" style="letter-spacing:0.135px;left:1468.3px;top:362px">Mã phiếu</div>
<div class="t b h12" style="letter-spacing:0.186px;left:1571.3px;top:362px">Tổng tiền</div>
<div class="t b h12" style="letter-spacing:0.088px;left:1645.8px;top:362px">Ghi chú</div>
<div class="t b h12" style="letter-spacing:0.163px;left:1720.8px;top:362px">Người lập</div>
<div class="t b h12" style="letter-spacing:0.334px;left:1795.8px;top:362px">Kho xuất</div>
<div class="a" style="left:1870.8px;top:362px;width:33px;height:15px;overflow:hidden"><div class="t b h12" style="left:0;top:0;letter-spacing:0.4px">Kho nhận</div></div>
<svg class="a" style="left:1355px;top:390px" width="8" height="10" viewBox="0 0 8 10"><circle cx="3.6" cy="3" r="1.9" fill="#fff" stroke="#000" stroke-width="1.4"/><path d="M3.6 4.6V9" stroke="#000" stroke-width="1.3"/></svg>
<svg class="a" style="left:1381px;top:392px" width="10" height="6" viewBox="0 0 10 6"><path d="M0.3 1.5H9.2M0.3 4.2H9.2" stroke="#8a8a8a" stroke-width="1"/></svg>
<svg class="a" style="left:1468.5px;top:389px" width="17" height="11" viewBox="0 0 17 11"><rect x="4.6" y="0" width="6.6" height="10.6" rx="0.6" fill="#11a535"/><text x="0" y="8.2" font-family="Liberation Mono,monospace" font-weight="bold" font-size="6.5" fill="#666">A</text><text x="5.9" y="8.2" font-family="Liberation Mono,monospace" font-weight="bold" font-size="6.5" fill="#fff">B</text><text x="12" y="8.2" font-family="Liberation Mono,monospace" font-weight="bold" font-size="6.5" fill="#666">C</text></svg>
<svg class="a" style="left:1575px;top:392px" width="10" height="6" viewBox="0 0 10 6"><path d="M0.3 1.5H9.2M0.3 4.2H9.2" stroke="#8a8a8a" stroke-width="1"/></svg>
<svg class="a" style="left:1646.7px;top:389px" width="17" height="11" viewBox="0 0 17 11"><rect x="4.6" y="0" width="6.6" height="10.6" rx="0.6" fill="#11a535"/><text x="0" y="8.2" font-family="Liberation Mono,monospace" font-weight="bold" font-size="6.5" fill="#666">A</text><text x="5.9" y="8.2" font-family="Liberation Mono,monospace" font-weight="bold" font-size="6.5" fill="#fff">B</text><text x="12" y="8.2" font-family="Liberation Mono,monospace" font-weight="bold" font-size="6.5" fill="#666">C</text></svg>
<svg class="a" style="left:1721.7px;top:389px" width="17" height="11" viewBox="0 0 17 11"><rect x="4.6" y="0" width="6.6" height="10.6" rx="0.6" fill="#11a535"/><text x="0" y="8.2" font-family="Liberation Mono,monospace" font-weight="bold" font-size="6.5" fill="#666">A</text><text x="5.9" y="8.2" font-family="Liberation Mono,monospace" font-weight="bold" font-size="6.5" fill="#fff">B</text><text x="12" y="8.2" font-family="Liberation Mono,monospace" font-weight="bold" font-size="6.5" fill="#666">C</text></svg>
<svg class="a" style="left:1796.7px;top:389px" width="17" height="11" viewBox="0 0 17 11"><rect x="4.6" y="0" width="6.6" height="10.6" rx="0.6" fill="#11a535"/><text x="0" y="8.2" font-family="Liberation Mono,monospace" font-weight="bold" font-size="6.5" fill="#666">A</text><text x="5.9" y="8.2" font-family="Liberation Mono,monospace" font-weight="bold" font-size="6.5" fill="#fff">B</text><text x="12" y="8.2" font-family="Liberation Mono,monospace" font-weight="bold" font-size="6.5" fill="#666">C</text></svg>
<svg class="a" style="left:1871.7px;top:389px" width="17" height="11" viewBox="0 0 17 11"><rect x="4.6" y="0" width="6.6" height="10.6" rx="0.6" fill="#11a535"/><text x="0" y="8.2" font-family="Liberation Mono,monospace" font-weight="bold" font-size="6.5" fill="#666">A</text><text x="5.9" y="8.2" font-family="Liberation Mono,monospace" font-weight="bold" font-size="6.5" fill="#fff">B</text><text x="12" y="8.2" font-family="Liberation Mono,monospace" font-weight="bold" font-size="6.5" fill="#666">C</text></svg>
<div class="t" style="letter-spacing:-0.029px;left:1378px;top:415px">13/10/2023</div>
<div class="t" style="letter-spacing:-0.084px;left:1468.3px;top:415px">NCK00005-1...</div>
<div class="t" style="right:282.2px;top:415px">30,000</div>
<div class="t" style="letter-spacing:-0.393px;left:1720.7px;top:415px">Administ...</div>
<div class="t" style="letter-spacing:-0.125px;left:1796px;top:415px">Kho chính</div>
<div class="a" style="left:1871px;top:415px;width:33px;height:16px;overflow:hidden"><div class="t" style="left:0;top:0;letter-spacing:0.2px">Kho Phụ 1</div></div>
<div class="t" style="letter-spacing:-0.029px;left:1378px;top:443px">13/10/2023</div>
<div class="t" style="letter-spacing:-0.084px;left:1468.3px;top:443px">NCK00004-1...</div>
<div class="t" style="right:282.2px;top:443px">120,000</div>
<div class="t" style="letter-spacing:-0.393px;left:1720.7px;top:443px">Administ...</div>
<div class="t" style="letter-spacing:-0.125px;left:1796px;top:443px">Kho chính</div>
<div class="a" style="left:1871px;top:443px;width:33px;height:16px;overflow:hidden"><div class="t" style="left:0;top:0;letter-spacing:0.2px">Kho Phụ 1</div></div>
<div class="t" style="letter-spacing:-0.029px;left:1378px;top:471px">13/10/2023</div>
<div class="t" style="letter-spacing:-0.084px;left:1468.3px;top:471px">NCK00003-1...</div>
<div class="t" style="right:282.2px;top:471px">100,000</div>
<div class="t" style="letter-spacing:-0.393px;left:1720.7px;top:471px">Administ...</div>
<div class="t" style="letter-spacing:-0.125px;left:1796px;top:471px">Kho chính</div>
<div class="a" style="left:1871px;top:471px;width:33px;height:16px;overflow:hidden"><div class="t" style="left:0;top:0;letter-spacing:0.2px">Kho Phụ 1</div></div>
<div class="t" style="letter-spacing:-0.029px;left:1378px;top:499px">13/10/2023</div>
<div class="t b red" style="letter-spacing:-0.508px;left:1468.3px;top:499px;font-size:15px">NCK00002-...</div>
<div class="t" style="right:282.2px;top:499px">3,848,000</div>
<div class="t" style="letter-spacing:-0.393px;left:1720.7px;top:499px">Administ...</div>
<div class="t" style="letter-spacing:-0.125px;left:1796px;top:499px">Kho chính</div>
<div class="a" style="left:1871px;top:499px;width:33px;height:16px;overflow:hidden"><div class="t" style="left:0;top:0;letter-spacing:0.2px">Kho Phụ 1</div></div>
<svg class="a" style="left:1356.5px;top:503px" width="6" height="9" viewBox="0 0 6 9"><path d="M1 0.4L5 4.5L1 8.6Z" fill="#000"/></svg>
<div class="gl" style="left:1351px;top:890px;width:553px;height:1px;background:#b0b0b0"></div>
<div class="a hatch" style="left:1351px;top:891px;width:553px;height:33px"></div>
<div class="hdash" style="left:1351px;top:924px;width:553px"></div>
<div class="box hatch" style="left:1368px;top:924px;width:483px;height:16px"></div>
<svg class="a" style="left:1356px;top:928px" width="6" height="9" viewBox="0 0 6 9"><path d="M5 0.6L1 4.5L5 8.4Z" fill="#000"/></svg>
<svg class="a" style="left:1892px;top:928px" width="6" height="9" viewBox="0 0 6 9"><path d="M1 0.6L5 4.5L1 8.4Z" fill="#000"/></svg>
<div class="a" style="left:1915px;top:181px;width:1px;height:828px;background:#b4b4b4"></div>
<div class="a" style="left:1918px;top:184px;width:1px;height:828px;background:#c4c4c4"></div><div class="a" style="left:1916px;top:184px;width:2px;height:1px;background:#c4c4c4"></div>

<!-- annotations -->
<div class="a" style="left:2px;top:230px;width:1338px;height:96px;border:2px solid #f93c3c;box-shadow:1px 3px 5px rgba(0,0,0,.36),inset 1px 3px 5px rgba(0,0,0,.3)"></div>
<div class="a" style="left:1px;top:323px;width:1339px;height:171px;border:2px solid #f93c3c;border-top-width:3px;box-shadow:1px 3px 5px rgba(0,0,0,.36),inset 1px 3px 5px rgba(0,0,0,.3)"></div>
<svg class="a" style="left:0;top:0;pointer-events:none" width="1920" height="1039" viewBox="0 0 1920 1039">
<defs><filter id="sh" x="-5%" y="-10%" width="112%" height="125%"><feGaussianBlur stdDeviation="2.2"/></filter></defs>
<path d="M1046 199.5L962 230.3" stroke="#000" stroke-width="2" fill="none"/><path d="M957 232L966.8 225.6L968.6 231.2Z" fill="#000"/>
<path d="M348 536.5L213 498.4" stroke="#000" stroke-width="2" fill="none"/><path d="M208.8 497.2L220 496.8L218.2 503.2Z" fill="#000"/>
<rect x="1047" y="124" width="202" height="79" rx="6" fill="#000" opacity="0.45" filter="url(#sh)"/>
<rect x="1044.5" y="120.5" width="201.5" height="78" rx="5.5" fill="#fff" stroke="#000" stroke-width="2"/>
<rect x="341" y="542" width="348" height="92" rx="6" fill="#000" opacity="0.45" filter="url(#sh)"/>
<rect x="337.8" y="537.5" width="348.6" height="91.6" rx="5.5" fill="#fff" stroke="#000" stroke-width="2"/>
<path d="M654.5 794.5V810.8L658.4 807.2L661 813Q662.4 813.9 663.6 813.1Q664.4 812.3 664 811.3L661.7 806.4L666 806.2Z" fill="#fff" stroke="#10101a" stroke-width="1.3" stroke-linejoin="round"/>
</svg>
<div class="t" style="letter-spacing:-0.418px;left:1067px;top:142px;font-family:'Liberation Sans',sans-serif;font-size:16px;line-height:18px;height:18px;color:#111">1.Thông tin phiếu nhập</div>
<div class="t" style="letter-spacing:-0.534px;left:1105.5px;top:160px;font-family:'Liberation Sans',sans-serif;font-size:16px;line-height:18px;height:18px;color:#111">chuyển kho</div>
<div class="t" style="letter-spacing:-0.392px;left:356px;top:574.5px;font-family:'Liberation Sans',sans-serif;font-size:16px;line-height:18px;height:18px;color:#111">2.Thêm hàng hóa vào phiếu nhập chuyển kho</div>

</body>
</html>
